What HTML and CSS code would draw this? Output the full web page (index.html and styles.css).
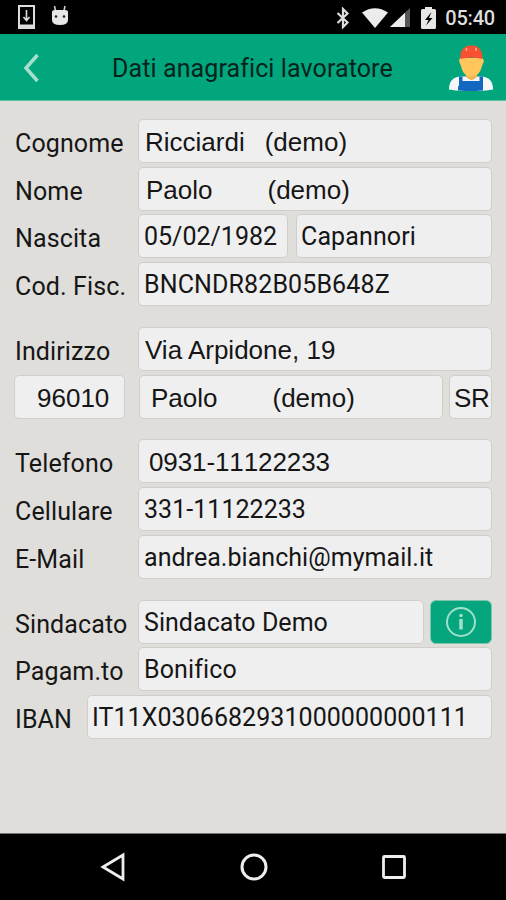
FILE: index.html
```
<!DOCTYPE html>
<html lang="it">
<head>
  <meta charset="UTF-8">
  <title>Dati anagrafici lavoratore</title>
  <link rel="stylesheet" href="styles.css">
</head>
<body>
  <div class="status-bar">
    <svg class="download-icon" viewBox="0 0 17 24" width="17" height="24">
      <rect x="1" y="1" width="15" height="22" fill="none" stroke="#ddd" stroke-width="2"/>
      <path d="M1 19.500h15v3.500H1z" fill="#ddd"/>
      <path d="M8.500 5v10M5.500 12l3 3.500 3-3.500" fill="none" stroke="#ddd" stroke-width="1.600"/>
    </svg>
    <svg class="droid-icon" viewBox="0 0 18 21" width="18" height="21">
      <path d="M4.500 6L3.500 1M13 6l1-5" stroke="#ccc" stroke-width="1.600"/>
      <path d="M1 7q0-2 3-2h10q3 0 3 2v8q0 5-8 5t-8-5z" fill="#e6e6e6"/>
      <circle cx="5" cy="11.500" r="1.300" fill="#222"/>
      <circle cx="13" cy="11.500" r="1.300" fill="#222"/>
    </svg>
    <div class="status-right">
      <svg viewBox="0 0 14 22" width="14" height="22">
        <path d="M1.500 6l10 9.500L7 20V2l4.500 4.500L1.500 16" fill="none" stroke="#ddd" stroke-width="2.200"/>
      </svg>
      <svg class="wifi" viewBox="0 0 26 20" width="26" height="20">
        <path d="M0 4.500Q13-4 26 4.500L13 20z" fill="#ececec"/>
      </svg>
      <svg class="signal" viewBox="0 0 20 19" width="20" height="19">
        <path d="M0 19L20 0v19z" fill="#555"/>
        <path d="M0 19L15 4.750V19z" fill="#ececec"/>
      </svg>
      <svg class="battery" viewBox="0 0 15 22" width="15" height="22">
        <path d="M4 0h7v2h2.500q1.500 0 1.500 1.500v17q0 1.500-1.500 1.500h-12Q0 22 0 20.500v-17Q0 2 1.500 2H4z" fill="#e6e6e6"/>
        <path d="M10.500 5L4 13h3.500L5 18.500l6.500-7.500H8z" fill="#000"/>
      </svg>
      <span class="clock">05:40</span>
    </div>
  </div>

  <div class="header">
    <svg class="back" viewBox="0 0 17 30" width="17" height="30">
      <path d="M14.500 2L3 15l11.500 13" fill="none" stroke="#a6e0cd" stroke-width="3.500"/>
    </svg>
    <h1>Dati anagrafici lavoratore</h1>
    <svg class="worker" viewBox="0 0 44 46" width="44" height="46">
      <path d="M0 44.500Q0 32 12 31.500h20Q44 32 44 44.500Q22 48 0 44.500z" fill="#f4f6fa"/>
      <path d="M17 26h11v5.500q-5.500 7-11 0z" fill="#f0b04c"/>
      <path d="M11 13h22.500l1.500 3-2 5q-2 8-7.500 10.500h-6Q13.500 29 12 21l-2-5z" fill="#ffc65c"/>
      <path d="M11.500 14Q10.500 1 22 0.500T33.500 14q-11-3-22 0z" fill="#fa5032"/>
      <path d="M17.500 3v3M27 3v3" stroke="#ffb09c" stroke-width="1.500"/>
      <path d="M10 31.500h3.500V36h17v-4.500H34V45.500q-12 1.200-25 0V42q1.500-2 1-4z" fill="#1268c0"/>
    </svg>
  </div>

  <div class="form">
    <div class="group">
      <div class="row">
        <label>Cognome</label>
        <div class="field arial pad-l">Ricciardi<span class="demo demo-first">(demo)</span></div>
      </div>
      <div class="row">
        <label>Nome</label>
        <div class="field arial name">Paolo<span class="demo">(demo)</span></div>
      </div>
      <div class="row">
        <label>Nascita</label>
        <div class="field date">05/02/1982</div>
        <div class="field city">Capannori</div>
      </div>
      <div class="row">
        <label>Cod. Fisc.</label>
        <div class="field">BNCNDR82B05B648Z</div>
      </div>
    </div>

    <div class="group">
      <div class="row">
        <label>Indirizzo</label>
        <div class="field arial pad-l">Via Arpidone, 19</div>
      </div>
      <div class="row">
        <div class="field arial cap">96010</div>
        <div class="field arial town">Paolo<span class="demo">(demo)</span></div>
        <div class="field arial prov">SR</div>
      </div>
    </div>

    <div class="group">
      <div class="row">
        <label>Telefono</label>
        <div class="field arial phone">0931-11122233</div>
      </div>
      <div class="row">
        <label>Cellulare</label>
        <div class="field tight">331-11122233</div>
      </div>
      <div class="row">
        <label>E-Mail</label>
        <div class="field tight">andrea.bianchi@mymail.it</div>
      </div>
    </div>

    <div class="group">
      <div class="row">
        <label>Sindacato</label>
        <div class="field tight">Sindacato Demo</div>
        <button class="info">
          <svg viewBox="0 0 32 32" width="32" height="32">
            <circle cx="16" cy="16" r="14" fill="none" stroke="#9fe0ca" stroke-width="2"/>
            <circle cx="16" cy="9.500" r="1.800" fill="#9fe0ca"/>
            <path d="M16 13v10.500" stroke="#9fe0ca" stroke-width="3.500"/>
          </svg>
        </button>
      </div>
      <div class="row">
        <label>Pagam.to</label>
        <div class="field">Bonifico</div>
      </div>
      <div class="row">
        <label class="short">IBAN</label>
        <div class="field iban">IT11X0306682931000000000111</div>
      </div>
    </div>
  </div>

  <div class="nav-bar">
    <svg viewBox="0 0 28 30" width="28" height="30">
      <path d="M4 15L24 3v24z" fill="none" stroke="#eee" stroke-width="2.800"/>
    </svg>
    <svg viewBox="0 0 28 30" width="28" height="30">
      <circle cx="14" cy="15" r="12" fill="none" stroke="#eee" stroke-width="3"/>
    </svg>
    <svg viewBox="0 0 28 30" width="28" height="30">
      <rect x="3.500" y="4.500" width="21" height="21" rx="1" fill="none" stroke="#eee" stroke-width="2.800"/>
    </svg>
  </div>
</body>
</html>
```
FILE: styles.css
```
* {
  box-sizing: border-box;
}

body {
  margin: 0;
  height: 900px;
  display: flex;
  flex-direction: column;
  overflow: hidden;
  background: #dfdeda;
  color: #161616;
  font-family: Roboto, sans-serif;
  font-size: 25px;
  letter-spacing: 0.12px;
}

svg {
  display: block;
  flex: none;
}

.status-bar {
  height: 34px;
  display: flex;
  align-items: center;
  padding: 0 11px 0 18px;
  background: #000;
}

.droid-icon {
  margin-left: 16px;
  margin-bottom: 3px;
}

.status-right {
  display: flex;
  align-items: center;
  margin-left: auto;
}

.status-right svg {
  margin-top: 1px;
}

.status-right .wifi {
  margin-left: 12px;
}

.status-right .signal {
  margin-left: 2px;
}

.status-right .battery {
  margin-left: 11px;
}

.clock {
  margin-left: 9px;
  padding-top: 2px;
  color: #ddd;
  font-size: 20px;
  font-weight: 500;
  letter-spacing: -0.2px;
}

.header {
  height: 67px;
  display: flex;
  align-items: center;
  padding: 2px 13px 0 23px;
  background: #02a67d;
  border-bottom: 1px solid #5fbfa3;
}

h1 {
  margin: 0 0 0 72px;
  color: #07231b;
  font-size: 25px;
  font-weight: 400;
  letter-spacing: 0.1px;
}

.worker {
  margin-left: auto;
}

.form {
  flex: 1;
  padding: 18px 14px 0 14px;
}

.group {
  display: grid;
  gap: 3.700px;
  margin-bottom: 20.800px;
}

.row {
  display: flex;
  height: 44px;
}

label {
  width: 124px;
  padding-left: 1px;
  line-height: 50px;
  white-space: nowrap;
}

.field {
  flex: 1;
  padding-left: 5px;
  background: #efefef;
  border: 1px solid #cfcecb;
  border-radius: 5px;
  line-height: 44px;
  white-space: pre;
}

.arial {
  font-family: "Liberation Sans", sans-serif;
  font-size: 26px;
  letter-spacing: 0;
}

.pad-l {
  padding-left: 6px;
}

.name {
  padding-left: 7px;
}

.demo {
  margin-left: 55px;
}

.demo-first {
  margin-left: 20px;
}

.date {
  flex: 0 0 150px;
  letter-spacing: 0;
}

.city {
  margin-left: 8px;
  padding-left: 4px;
}

.cap {
  flex: 0 0 111px;
  padding-left: 22px;
}

.town {
  margin-left: 14px;
  padding-left: 11px;
}

.prov {
  flex: 0 0 43px;
  margin-left: 6px;
  padding-left: 4px;
  letter-spacing: -0.4px;
}

.phone {
  padding-left: 10px;
  font-kerning: none;
  letter-spacing: -0.1px;
}

.tight {
  letter-spacing: 0.04px;
}

.iban {
  padding-left: 4px;
  letter-spacing: 0.06px;
}

.info {
  width: 62px;
  margin-left: 6px;
  padding: 0;
  display: flex;
  justify-content: center;
  align-items: center;
  background: #05a57d;
  border: 1px solid #7cc5ae;
  border-radius: 6px;
}

.short {
  width: 73px;
}

.nav-bar {
  height: 67px;
  display: flex;
  justify-content: space-between;
  align-items: center;
  padding: 0 98px 0 99px;
  background: #000;
  border-top: 1px solid #777;
}
```
